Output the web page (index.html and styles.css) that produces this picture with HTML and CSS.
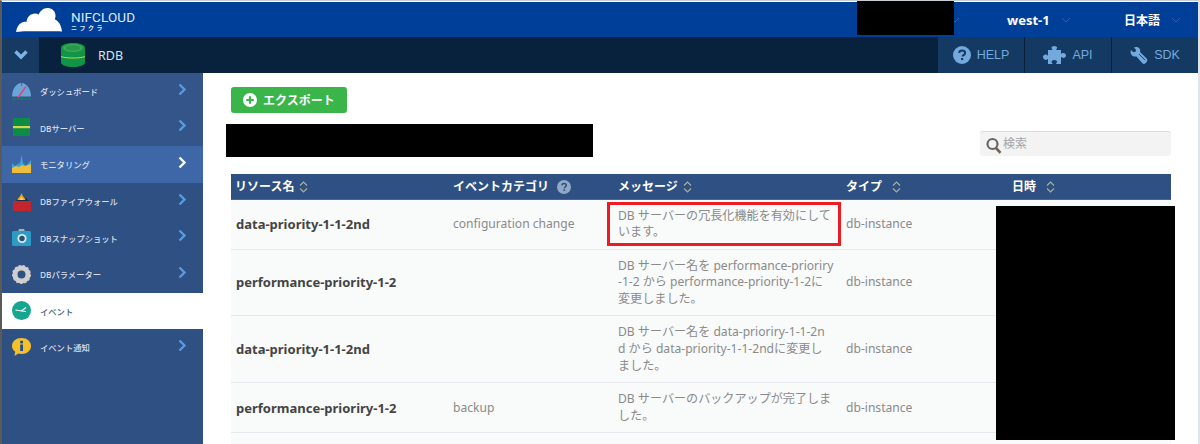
FILE: index.html
```html
<!DOCTYPE html>
<html lang="ja">
<head>
<meta charset="utf-8">
<title>NIFCLOUD RDB</title>
<link rel="stylesheet" href="styles.css">
</head>
<body>
<div class="page">
  <header class="topbar">
    <div class="logo">
      <svg class="cloud" width="47" height="26" viewBox="16 7 47 26"><path fill="#fff" d="M16 32.500c.5-5 2.500-8.500 6-10 1.500-.7 3-.8 4.500-.4.500-5 4-8.500 8.500-8.500 1.500 0 2.700.4 3.700 1 1.300-4 5.300-7 9.300-6.600 4.500.4 8 3.800 7.500 8.500-.1 1-.4 1.900-.8 2.700 3.800 1.500 6.700 6 7.300 12.300-4-.5-8-.3-12-.3H27c-4 0-7.500.3-11 .8z"/></svg>
      <div class="logo-text"><span class="logo-main">NIFCLOUD</span><span class="logo-sub">ニフクラ</span></div>
    </div>
    <div class="top-right">
      <div class="top-menu top-account"><svg class="dim-chev" width="10" height="6" viewBox="0 0 10 6"><path d="M1 1l4 4 4-4" fill="none" stroke="#2a62ad" stroke-width="1"/></svg></div>
      <div class="top-menu top-region"><span>west-1</span><svg class="dim-chev" width="10" height="6" viewBox="0 0 10 6"><path d="M1 1l4 4 4-4" fill="none" stroke="#2a62ad" stroke-width="1"/></svg></div>
      <div class="top-menu top-lang"><span>日本語</span><svg class="dim-chev" width="10" height="6" viewBox="0 0 10 6"><path d="M1 1l4 4 4-4" fill="none" stroke="#2a62ad" stroke-width="1"/></svg></div>
    </div>
  </header>

  <div class="subbar">
    <div class="toggle"><svg width="14" height="10" viewBox="0 0 14 10"><path d="M1.500 1.500 7 7l5.500-5.500" fill="none" stroke="#7db4e6" stroke-width="3.400"/></svg></div>
    <svg class="db-icon" width="24" height="24" viewBox="0 0 24 24"><path fill="#109447" d="M0 4.500C0 2 5.400 0 12 0s12 2 12 4.500v15C24 22 18.600 24 12 24S0 22 0 19.500z"/><ellipse cx="12" cy="5" rx="10" ry="4" fill="#3fa956"/><ellipse cx="12" cy="5" rx="7.500" ry="2.700" fill="#27984a"/><path d="M0 13.500c4 2 20 2 24 0" fill="none" stroke="#c9d53c" stroke-width="1"/></svg>
    <span class="service">RDB</span>
    <nav class="tools">
      <a class="tool"><svg width="18" height="18" viewBox="0 0 17 17"><circle cx="8.500" cy="8.500" r="8.500" fill="#74a9dd"/><path d="M5.800 6.500c.2-1.500 1.300-2.300 2.800-2.300 1.600 0 2.800.9 2.800 2.300 0 1.200-.8 1.700-1.500 2.200-.6.400-.9.700-.9 1.300" fill="none" stroke="#143a64" stroke-width="1.900"/><rect x="7.600" y="11.300" width="2" height="2" fill="#143a64"/></svg><span>HELP</span></a>
      <a class="tool"><svg width="23" height="18" viewBox="0 0 23 18"><path fill="#74a9dd" d="M5 4h4.500C9 3 8.500 2.500 8.500 1.800 8.500.7 9.800 0 11.300 0s2.800.7 2.800 1.800c0 .7-.5 1.200-1 2.200H18v4c1-.5 1.500-.9 2.200-.9 1.500 0 2.800 1 2.800 2.400s-1.300 2.400-2.800 2.400c-.7 0-1.200-.4-2.200-.9v7H13c.5-1 1-1.500 1-2.200 0-1.200-1.200-1.900-2.700-1.900s-2.700.7-2.700 1.900c0 .7.500 1.200 1 2.200H5v-5c-1 .5-1.500 1-2.200 1C1.300 13.600 0 12.500 0 11s1.300-2.600 2.800-2.600c.7 0 1.200.5 2.200 1z"/></svg><span>API</span></a>
      <a class="tool"><svg width="18" height="17" viewBox="0 0 18 18"><path fill="#74a9dd" d="M.5 3.300 3 5.600l2.300-.5.600-2.300L3.500.6C5.500-.4 8-.1 9.300 1.300c1 1.100 1.200 2.700.8 4l7 6.800c.9.900.9 2.700 0 3.700l-1.300 1.400c-.9.900-2.300.9-3.200 0L6 9.800C4.500 10.300 2.600 10 1.400 8.700.1 7.300-.3 5 .5 3.300z"/><path d="M9 7.500l6.500 6.500" stroke="#143a64" stroke-width="1"/></svg><span>SDK</span></a>
    </nav>
  </div>

  <div class="body-row">
    <aside class="sidebar">
      <a class="nav-item nav-upper">
        <svg class="nav-icon" width="19" height="19" viewBox="0 0 19 19"><path fill="#6aa5da" d="M0 14.500C0 8 4 1 9.500 1S19 8 19 14.500z"/><path d="M9.500 1v3" stroke="#2e5082" stroke-width=".6"/><path d="M14 4.500 6 15.500" stroke="#e8417e" stroke-width="1.500"/><path d="M0 17h19" stroke="#1d8d52" stroke-width=".8"/></svg>
        <span class="nav-label">ダッシュボード</span>
        <svg class="chev" width="9" height="13" viewBox="0 0 9 13"><path d="M1.500 1.500l5 5-5 5" fill="none" stroke="#5a9ade" stroke-width="2.400"/></svg>
      </a>
      <a class="nav-item nav-upper">
        <svg class="nav-icon" width="19" height="19" viewBox="0 0 19 19"><rect x="1" width="17" height="18" fill="#0d8c45"/><rect x="1" y="8" width="17" height="2.200" fill="#d7d64a"/></svg>
        <span class="nav-label">DBサーバー</span>
        <svg class="chev" width="9" height="13" viewBox="0 0 9 13"><path d="M1.500 1.500l5 5-5 5" fill="none" stroke="#5a9ade" stroke-width="2.400"/></svg>
      </a>
      <a class="nav-item nav-active">
        <svg class="nav-icon" width="19" height="19" viewBox="0 0 19 19"><path fill="#39a6da" d="M0 8l3 3 3-2 2-1 1.500-8L11 8l3 3 5-6v8H0z"/><path fill="#edbd3c" d="M0 13l4-2 3 1 3-2 3 1 6-2v9H0z"/></svg>
        <span class="nav-label">モニタリング</span>
        <svg class="chev" width="9" height="13" viewBox="0 0 9 13"><path d="M1.500 1.500l5 5-5 5" fill="none" stroke="#fff" stroke-width="2.400"/></svg>
      </a>
      <a class="nav-item">
        <svg class="nav-icon" width="19" height="19" viewBox="0 0 19 19"><rect x="1" y="9" width="18" height="10" fill="#c4262e"/><path fill="#1d2d4a" d="M4 9l3-3h7l3 3z"/><path fill="#f1a123" d="M5.500 8c0-2 3-3 4-7 1 4 4 5 4 7z"/><path fill="#f8d94a" d="M7.500 8c0-1.300 1.500-1.600 2-3.500.5 1.900 2 2.200 2 3.500z"/></svg>
        <span class="nav-label">DBファイアウォール</span>
        <svg class="chev" width="9" height="13" viewBox="0 0 9 13"><path d="M1.500 1.500l5 5-5 5" fill="none" stroke="#5a9ade" stroke-width="2.400"/></svg>
      </a>
      <a class="nav-item">
        <svg class="nav-icon" width="19" height="19" viewBox="0 0 19 19"><path fill="#9fb6c8" d="M6 3.500 7 1h5l1 2.500z"/><rect y="3" width="19" height="15" rx="1.500" fill="#2d9cc3"/><circle cx="10" cy="10.500" r="4.600" fill="#d9e8ef"/><circle cx="10" cy="10.500" r="2.700" fill="#2b4e78"/></svg>
        <span class="nav-label">DBスナップショット</span>
        <svg class="chev" width="9" height="13" viewBox="0 0 9 13"><path d="M1.500 1.500l5 5-5 5" fill="none" stroke="#5a9ade" stroke-width="2.400"/></svg>
      </a>
      <a class="nav-item">
        <svg class="nav-icon" width="19" height="19" viewBox="0 0 19 19"><circle cx="9.500" cy="9.500" r="6.500" fill="none" stroke="#cfcfcf" stroke-width="5"/><circle cx="9.500" cy="9.500" r="8.300" fill="none" stroke="#cfcfcf" stroke-width="2.400" stroke-dasharray="2.200 1.800"/></svg>
        <span class="nav-label">DBパラメーター</span>
        <svg class="chev" width="9" height="13" viewBox="0 0 9 13"><path d="M1.500 1.500l5 5-5 5" fill="none" stroke="#5a9ade" stroke-width="2.400"/></svg>
      </a>
      <a class="nav-item nav-current">
        <svg class="nav-icon" width="19" height="19" viewBox="0 0 19 19"><circle cx="9.500" cy="9.500" r="9.500" fill="#16a58f"/><path d="M3.500 9 9.500 10 14 6.500M9.500 10l4.500.5" fill="none" stroke="#fff" stroke-width="1.100"/></svg>
        <span class="nav-label">イベント</span>
      </a>
      <a class="nav-item">
        <svg class="nav-icon" width="19" height="19" viewBox="0 0 19 19"><path fill="#f5c02c" d="M9.500 0C15 0 19 3.500 19 8s-4 8-9.500 8c-1.200 0-2.300-.2-3.300-.5L2.500 18l.7-4.200C1.200 12.400 0 10.300 0 8 0 3.500 4 0 9.500 0z"/><rect x="8.200" y="2.800" width="2.800" height="2.600" fill="#1f4f86"/><rect x="8.200" y="6.500" width="2.800" height="6.500" fill="#1f4f86"/></svg>
        <span class="nav-label">イベント通知</span>
        <svg class="chev" width="9" height="13" viewBox="0 0 9 13"><path d="M1.500 1.500l5 5-5 5" fill="none" stroke="#5a9ade" stroke-width="2.400"/></svg>
      </a>
    </aside>

    <main class="content">
      <button class="export"><svg width="14" height="14" viewBox="0 0 14 14"><circle cx="7" cy="7" r="7" fill="#fff"/><path d="M7 3.200v7.600M3.200 7h7.600" stroke="#3ab54a" stroke-width="2.200"/></svg><span>エクスポート</span></button>
      <div class="filters">
        <div class="search"><svg width="16" height="17" viewBox="0 0 16 17"><circle cx="6.500" cy="7" r="5" fill="none" stroke="#666" stroke-width="2.200"/><path d="M10 11l4.500 4.800" stroke="#6e6553" stroke-width="2.600"/></svg><span>検索</span></div>
      </div>
      <table class="events">
        <colgroup><col class="c1"><col class="c2"><col class="c3"><col class="c4"><col class="c5"></colgroup>
        <thead>
          <tr>
            <th class="th-first">リソース名<svg class="sort" width="9" height="12" viewBox="0 0 9 12"><path d="M1 4.500 4.500 1 8 4.500M1 7.500 4.500 11 8 7.500" fill="none" stroke="#a7b09c" stroke-width="1.200"/></svg></th>
            <th>イベントカテゴリ<svg class="qmark" width="14" height="14" viewBox="0 0 14 14"><circle cx="7" cy="7" r="7" fill="#8fa9c6"/><path d="M4.800 5.300C5 4.100 5.900 3.500 7.100 3.500c1.300 0 2.200.7 2.200 1.800 0 1-.6 1.400-1.200 1.800-.5.300-.8.600-.8 1.200" fill="none" stroke="#2e5082" stroke-width="1.500"/><rect x="6.400" y="9.200" width="1.700" height="1.700" fill="#2e5082"/></svg></th>
            <th>メッセージ<svg class="sort" width="9" height="12" viewBox="0 0 9 12"><path d="M1 4.500 4.500 1 8 4.500M1 7.500 4.500 11 8 7.500" fill="none" stroke="#a7b09c" stroke-width="1.200"/></svg></th>
            <th>タイプ<svg class="sort sort-wide" width="9" height="12" viewBox="0 0 9 12"><path d="M1 4.500 4.500 1 8 4.500M1 7.500 4.500 11 8 7.500" fill="none" stroke="#a7b09c" stroke-width="1.200"/></svg></th>
            <th>日時<svg class="sort sort-wide" width="9" height="12" viewBox="0 0 9 12"><path d="M1 4.500 4.500 1 8 4.500M1 7.500 4.500 11 8 7.500" fill="none" stroke="#a7b09c" stroke-width="1.200"/></svg></th>
          </tr>
        </thead>
        <tbody>
          <tr>
            <td class="name">data-priority-1-1-2nd</td>
            <td>configuration change</td>
            <td class="msg">DB サーバーの冗長化機能を有効にして<br>います。<span class="highlight"></span></td>
            <td>db-instance</td>
            <td></td>
          </tr>
          <tr>
            <td class="name">performance-priority-1-2</td>
            <td></td>
            <td class="msg">DB サーバー名を performance-prioriry<br>-1-2 から performance-priority-1-2に<br>変更しました。</td>
            <td>db-instance</td>
            <td></td>
          </tr>
          <tr>
            <td class="name">data-priority-1-1-2nd</td>
            <td></td>
            <td class="msg">DB サーバー名を data-prioriry-1-1-2n<br>d から data-priority-1-1-2ndに変更し<br>ました。</td>
            <td>db-instance</td>
            <td></td>
          </tr>
          <tr>
            <td class="name">performance-prioriry-1-2</td>
            <td>backup</td>
            <td class="msg">DB サーバーのバックアップが完了しま<br>した。</td>
            <td>db-instance</td>
            <td></td>
          </tr>
          <tr>
            <td class="name"></td>
            <td></td>
            <td class="msg msg-last">DB サーバー名を data-prioriry-1-1-2n<br>d から data-priority-1-1-2ndに変更し<br>ました。</td>
            <td></td>
            <td></td>
          </tr>
        </tbody>
      </table>
      <div class="redact redact-title"></div>
      <div class="redact redact-dates"></div>
    </main>
  </div>
  <div class="redact redact-account"></div>
</div>
</body>
</html>
```

FILE: styles.css
```css
* { box-sizing: border-box; }
html, body { margin: 0; height: 100%; }
body {
  overflow: hidden;
  background: #fff;
  font-family: "Noto Sans", "Noto Sans CJK JP", sans-serif;
}
.page {
  position: relative;
  width: 1200px;
  height: 444px;
  overflow: hidden;
  display: flex;
  flex-direction: column;
  padding-top: 1px;
  border-top: 1px solid #c9ced6;
  border-left: 2px solid #5a5a5a;
  border-right: 2px solid #dfe4ea;
  background: #fff;
}

/* top bar */
.topbar {
  flex: none;
  height: 35px;
  background: #003f98;
  display: flex;
  align-items: center;
  justify-content: space-between;
}
.logo { display: flex; align-items: center; gap: 8px; padding-left: 14px; }
.cloud { display: block; margin-top: 1px; }
.logo-text { display: flex; flex-direction: column; color: #dfe8f5; margin-top: 3px; }
.logo-main {
  font-family: "Roboto", sans-serif;
  font-size: 13.500px;
  line-height: 14px;
  letter-spacing: .1px;
}
.logo-sub {
  font-size: 6px;
  line-height: 8px;
  letter-spacing: 2.500px;
  font-weight: 700;
}
.top-right { display: flex; align-items: center; height: 100%; }
.top-menu {
  flex: none;
  display: flex;
  align-items: center;
  height: 100%;
  color: #fff;
  font-weight: 700;
  white-space: nowrap;
}
.top-account { width: 10px; }
.top-region { width: 111px; padding-left: 47px; font-size: 13px; gap: 11px; }
.top-lang { width: 127px; padding-left: 53px; font-size: 12px; gap: 11px; }
.dim-chev { flex: none; margin-top: 1px; }

/* second bar */
.subbar {
  flex: none;
  height: 36px;
  background: #08213c;
  display: flex;
  align-items: center;
}
.toggle {
  width: 37px;
  height: 100%;
  background: #173a63;
  display: flex;
  align-items: center;
  justify-content: center;
}
.db-icon { margin-left: 22px; }
.service { margin-left: 13px; color: #d9e2ee; font-size: 12.500px; }
.tools { margin-left: auto; display: flex; width: 260px; height: 100%; gap: 1px; }
.tool {
  flex: 1;
  height: 100%;
  background: #143a64;
  color: #74a9dd;
  font-family: "Liberation Sans", sans-serif;
  font-size: 12.500px;
  display: flex;
  align-items: center;
  justify-content: center;
  gap: 6px;
}

/* body */
.body-row { flex: 1; display: flex; min-height: 0; }
.sidebar {
  flex: none;
  width: 201px;
  background: #2e5082;
}
.nav-item {
  height: 36.600px;
  display: flex;
  align-items: center;
  padding: 0 16px 0 10px;
  gap: 9px;
  color: #d8dfeb;
}
.nav-upper { background: #33558a; }
.nav-active { background: #3d67a6; }
.nav-current { background: #fff; color: #4a5a72; }
.nav-icon { flex: none; }
.nav-label { font-size: 8.300px; font-weight: 500; flex: 1; white-space: nowrap; }
.chev { flex: none; margin-bottom: 4px; }

/* content */
.content {
  position: relative;
  flex: 1;
  padding: 14px 27px 0 28px;
  min-width: 0;
}
.export {
  display: flex;
  align-items: center;
  gap: 6px;
  width: 116px;
  height: 26px;
  padding: 0 0 0 12px;
  border: 0;
  border-radius: 3px;
  background: #3ab54a;
  color: #fff;
  font-family: inherit;
  font-size: 12px;
  font-weight: 700;
}
.filters {
  display: flex;
  justify-content: flex-end;
  margin-top: 18px;
  margin-bottom: 18px;
}
.search {
  width: 191px;
  height: 25px;
  background: #f3f3f3;
  border-top: 1px solid #dcdcdc;
  border-radius: 3px;
  display: flex;
  align-items: center;
  gap: 1px;
  padding-left: 6px;
  color: #a5a5a5;
  font-size: 12px;
}
.search svg { margin-top: 3px; }
.search span { margin-bottom: 3px; }

.events {
  width: 940px;
  table-layout: fixed;
  border-collapse: collapse;
  font-size: 12.100px;
  color: #8a8a8a;
}
.c1 { width: 217px; }
.c2 { width: 165px; }
.c3 { width: 228px; }
.c4 { width: 166px; }
.c5 { width: 164px; }
.events th {
  height: 25px;
  padding: 0 5px 1px;
  background: #2e5082;
  color: #fff;
  font-size: 12px;
  font-weight: 700;
  text-align: left;
  white-space: nowrap;
  border-bottom: 1px solid #3d67a6;
}
.events th.th-first { padding-left: 4px; }
.sort { margin-left: 5px; vertical-align: -2px; }
.sort-wide { margin-left: 10px; }
.qmark { margin-left: 8px; vertical-align: -3px; }
.events td {
  position: relative;
  padding: 8px 5px;
  background: #f9fafa;
  border-bottom: 1px solid #e6e8ee;
  line-height: 16.600px;
  vertical-align: middle;
}
.events td.name { color: #444; font-size: 13px; font-weight: 700; }
.events td.msg { white-space: nowrap; }
.events td.msg-last { padding-top: 11px; }
.highlight {
  position: absolute;
  left: -6px;
  top: 2px;
  right: 0;
  bottom: 3px;
  border: 3px solid #ed1c24;
}

/* redaction blocks placed over the screenshot */
.redact { position: absolute; background: #000; }
.redact-account { left: 855px; top: 0; width: 97px; height: 34px; }
.redact-title { left: 23px; top: 51px; width: 367px; height: 33px; }
.redact-dates { left: 793px; top: 133px; width: 179px; height: 234px; }
```
